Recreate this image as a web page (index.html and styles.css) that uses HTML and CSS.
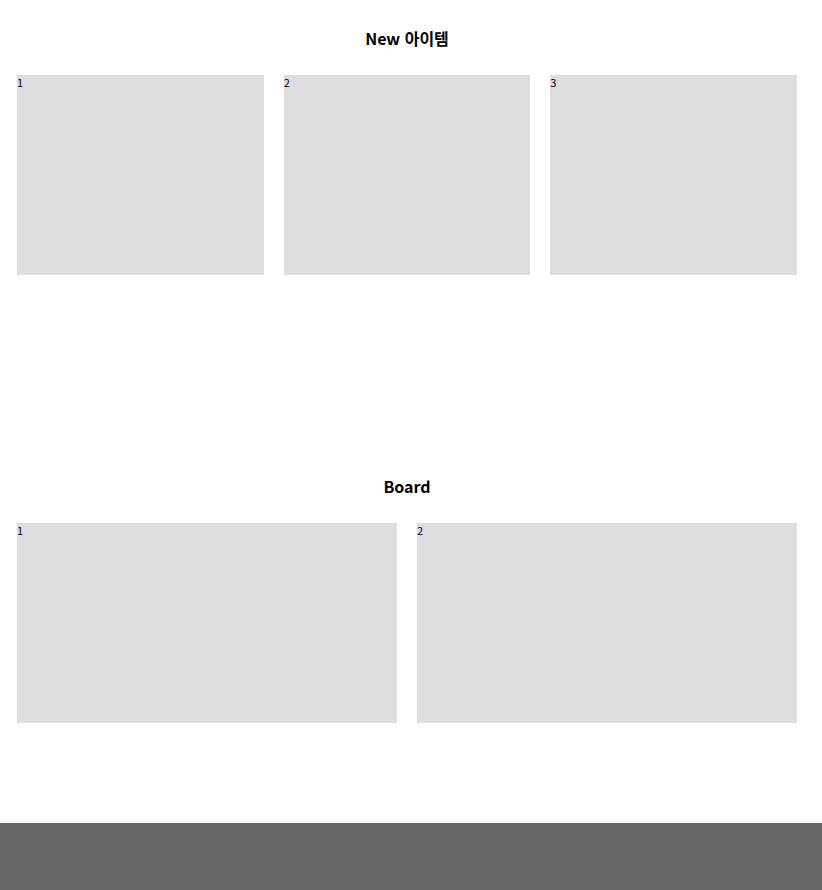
FILE: index.html
```html
<!DOCTYPE html>
<html lang="ko">
<head>
  <meta charset="utf-8">
  <link rel="stylesheet" href="styles.css">
</head>
<body>
  <section class="section new-items">
    <h2 class="section-title">New 아이템</h2>
    <ul class="item-list cols-3">
      <li class="item">1</li>
      <li class="item">2</li>
      <li class="item">3</li>
    </ul>
  </section>

  <section class="section board">
    <h2 class="section-title">Board</h2>
    <ul class="item-list cols-2">
      <li class="item">1</li>
      <li class="item">2</li>
    </ul>
  </section>

  <footer class="footer"></footer>
</body>
</html>
```

FILE: styles.css
```css
body {
  margin: 0;
  font-family: "Noto Sans CJK KR", "Noto Sans", sans-serif;
  color: #000;
  background-color: #fff;
}

.section {
  padding: 28px 25px 0 17px;
}

.new-items {
  height: 420px;
}

.board {
  padding-bottom: 100px;
}

.section-title {
  margin: 0 0 27px;
  font-size: 16px;
  line-height: 20px;
  font-weight: bold;
  text-align: center;
}

.item-list {
  list-style: none;
  margin: 0;
  padding: 0;
  display: grid;
  gap: 20px;
}

.cols-3 {
  grid-template-columns: repeat(3, 1fr);
}

.cols-2 {
  grid-template-columns: repeat(2, 1fr);
}

.item {
  height: 200px;
  background-color: #ddd;
  font-size: 11px;
  line-height: 14px;
}

.footer {
  height: 67px;
  background-color: #666;
}
```
